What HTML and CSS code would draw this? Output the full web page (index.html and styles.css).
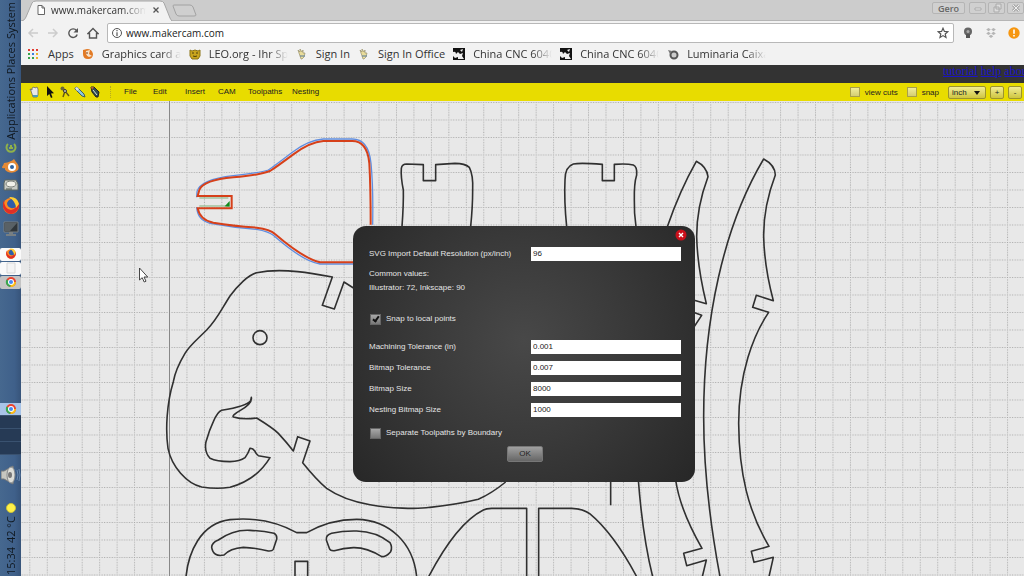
FILE: index.html
```html
<!DOCTYPE html>
<html lang="en">
<head>
<meta charset="utf-8">
<title>www.makercam.com</title>
<link rel="stylesheet" href="styles.css">
</head>
<body>
<div class="desktop">
  <aside class="panel">
    <nav class="panel-menu">
      <button class="vtext">System</button>
      <button class="vtext">Places</button>
      <button class="vtext">Applications</button>
    </nav>
    <div class="launchers">
      <svg viewBox="0 0 20 12" width="20" height="12"><path d="M7 2a4.500 4.500 0 1 0 6 0M10 3v4M8 6h4" fill="none" stroke="#8fb14a" stroke-width="2"/></svg>
      <svg viewBox="0 0 20 16" width="20" height="16"><path d="M3 5q7-1 10-4l2 3q4 4 2 8-4 4-10 2-4-2-3-4-3 1-3-1 2-3 2-4z" fill="#e58a35"/><circle cx="11" cy="9" r="4" fill="#fff"/><circle cx="11" cy="9" r="2" fill="#2d62a0"/></svg>
      <svg viewBox="0 0 20 14" width="20" height="14"><path d="M4 2h11l2 4v6H3V5z" fill="#c8cbc4" stroke="#5c6660"/><ellipse cx="10" cy="6" rx="5" ry="3" fill="#f2f2ea" stroke="#7b8079"/><path d="M5 11h6" stroke="#4d5850"/></svg>
      <svg viewBox="0 0 20 20" width="20" height="20"><use href="#firefox"/></svg>
      <svg viewBox="0 0 20 18" width="20" height="18"><path d="M3 2h14v10H3z" fill="#30363a" stroke="#777f83"/><path d="M4 3h12l-7 8H4z" fill="#596166"/><path d="M8 12h4v2h3v2H5v-2h3z" fill="#777f83"/></svg>
    </div>
    <div class="windows">
      <button class="win" aria-label="Firefox"><svg viewBox="0 0 20 20" width="12" height="12">
        <g id="firefox"><circle cx="10" cy="10" r="8" fill="#ff8a1e"/><path d="M3 4q-3 7 2 12 5 4 10 0 4-4 3-10-3 7-8 8-7-1-7-10" fill="#df2f27"/><path d="M10 3q6 0 6 7-3 3-6 2-4-1-4-5 1-3 4-4" fill="#2f5ea8"/><path d="M8 1q8-1 10 7l-3 4q0-6-7-11" fill="#ffcf33"/></g></svg></button>
      <button class="win" aria-label="Window"><svg viewBox="0 0 12 12" width="12" height="12"><path d="M2 1h8v10H2z" fill="#f4f4f4" stroke="#d8d8d8"/></svg></button>
      <button class="win grey" aria-label="Chrome"><svg viewBox="0 0 12 12" width="12" height="12">
        <g id="chrome"><circle cx="6" cy="6" r="5" fill="#e9432f"/><path d="M6 6 1.500 3.500A5 5 0 0 0 5.500 11z" fill="#37a852"/><path d="M6 6h5A5 5 0 0 1 5.500 11z" fill="#fbc116"/><circle cx="6" cy="6" r="3" fill="#fff"/><circle cx="6" cy="6" r="2" fill="#4688f1"/></g></svg></button>
    </div>
    <div class="switcher">
      <button class="space active" aria-label="Workspace 1"><svg viewBox="0 0 12 12" width="12" height="12"><use href="#chrome"/></svg></button>
      <button class="space" aria-label="Workspace 2"></button>
      <button class="space" aria-label="Workspace 3"></button>
      <button class="space" aria-label="Workspace 4"></button>
    </div>
    <div class="status">
      <svg viewBox="0 0 20 20" width="20" height="20"><path d="M0 6h3l9-5q2 9 0 18l-9-5H0z" fill="#c6c6c0" stroke="#73777a"/><ellipse cx="10" cy="10" rx="4" ry="8" fill="#deded8" stroke="#85888a"/><ellipse cx="9" cy="10" rx="2" ry="3" fill="#777"/><path d="M16 5q2 5 0 10M18 4q2 6 0 12" fill="none" stroke="#6b8bb1"/></svg>
      <svg class="sun" viewBox="0 0 10 10" width="10" height="10"><circle cx="5" cy="5" r="4.500" fill="#fff148" stroke="#c9bf38"/></svg>
      <span class="vtext">42 °C</span>
      <time class="vtext">15:34</time>
    </div>
  </aside>

  <main class="browser">
    <header class="tabs">
      <div class="tab">
        <svg class="tab-shape" viewBox="0 0 150 21" preserveAspectRatio="none"><path d="M0 21 Q3 20 4 17L10 3Q11 1 14 1H138Q141 1 142 3L148 18Q149 20 150 21" fill="#f2f2f2" stroke="#a6a6a6"/></svg>
        <svg viewBox="0 0 8 10" width="8" height="10"><path d="M1 .5h4l2.500 2.500v6.500H1zM5 .5V3h2.500" fill="#fff" stroke="#666"/></svg>
        <span class="tab-title fade">www.makercam.com</span>
        <button class="tab-close" aria-label="Close tab"><svg viewBox="0 0 6 6" width="6" height="6"><path d="m.5.5 5 5m0-5-5 5" stroke="#555" stroke-width="1.300"/></svg></button>
      </div>
      <button class="new-tab" aria-label="New tab"><svg viewBox="0 0 25 13" width="25" height="13"><path d="M2 1h16q2 0 3 2l3 8q0 1-2 1H7q-2 0-3-2L1 2q0-1 1-1z" fill="#cfcfcf" stroke="#a2a2a2"/></svg></button>
      <div class="frame-buttons">
        <button class="user">Gero</button>
        <button aria-label="Minimize"><svg viewBox="0 0 14 10" width="14" height="10"><path d="M4 5h6v2H4z" fill="#eee" stroke="#aaa"/></svg></button>
        <button aria-label="Restore"><svg viewBox="0 0 14 10" width="14" height="10"><path d="M6 1h5v5H6zM4 4h5v5H4z" fill="#ddd" stroke="#aaa"/></svg></button>
        <button aria-label="Close"><svg viewBox="0 0 14 10" width="14" height="10"><path d="m4 2 6 6m0-6-6 6" stroke="#aaa" stroke-width="3"/><path d="m4 2 6 6m0-6-6 6" stroke="#eee"/></svg></button>
      </div>
    </header>

    <div class="navbar">
      <button aria-label="Back"><svg viewBox="0 0 12 12" width="12" height="12"><path d="M11 6H2M6 2 2 6l4 4" class="arrow"/></svg></button>
      <button aria-label="Forward"><svg viewBox="0 0 12 12" width="12" height="12"><path d="M1 6h9M6 2l4 4-4 4" class="arrow"/></svg></button>
      <button aria-label="Reload"><svg viewBox="0 0 12 12" width="12" height="12"><path d="M9.500 3.500A4.300 4.300 0 1 0 10.200 7.500" class="line"/><path d="M11 1v4.500H6.500z" fill="#555"/></svg></button>
      <button aria-label="Home"><svg viewBox="0 0 12 12" width="12" height="12"><path d="M1 6.500 6 1.500l5 5H9.500V11h-7V6.500z" class="line"/></svg></button>
      <div class="omnibox">
        <svg viewBox="0 0 12 12" width="12" height="12"><circle cx="6" cy="6" r="4.500" fill="none" stroke="#555"/><path d="M6 3v1.200M6 5.300V9" stroke="#555" stroke-width="1.200"/></svg>
        <input aria-label="Address" value="www.makercam.com">
        <svg viewBox="0 0 12 12" width="12" height="12"><path d="m6 1.200 1.400 3.200 3.400.3-2.600 2.300.8 3.400-3-1.800-3 1.800.8-3.400-2.600-2.300 3.400-.3z" fill="none" stroke="#555" stroke-width="1.200"/></svg>
      </div>
      <div class="extensions">
        <svg viewBox="0 0 12 12" width="12" height="12"><circle cx="6" cy="4.500" r="4" fill="#666"/><circle cx="6" cy="4.500" r="1.500" fill="#aaa"/><path d="M4 7h4v4H4z" fill="#555"/></svg>
        <svg viewBox="0 0 12 12" width="12" height="12"><path d="m3.500 1 2.300 1.600L3.500 4.200 1.200 2.600zM8.500 1l2.300 1.600-2.300 1.600-2.300-1.600zM3.500 4.800l2.300 1.600L3.500 8 1.200 6.400zM8.500 4.800l2.300 1.600L8.500 8 6.200 6.400zM6 7.700l2.300 1.600L6 11 3.700 9.300z" fill="#b5b5b5"/></svg>
        <svg viewBox="0 0 12 12" width="12" height="12"><circle cx="6" cy="6" r="5.700" fill="#f6960f"/><path d="M6 2.500v4.200M6 8v1.500" stroke="#fff" stroke-width="1.600"/></svg>
      </div>
    </div>

    <nav class="bookmarks">
      <a href="#" class="apps"><svg viewBox="0 0 10 10" width="10" height="10"><path d="M0 0h2v2H0zM4 0h2v2H4zM8 0h2v2H8z" fill="#e23b31"/><path d="M0 4h2v2H0zM0 8h2v2H0zM4 8h2v2H4z" fill="#38a34c"/><path d="M4 4h2v2H4z" fill="#3b7de0"/><path d="M8 4h2v2H8zM8 8h2v2H8z" fill="#efb22a"/></svg><span>Apps</span></a>
      <a href="#"><svg viewBox="0 0 12 12" width="12" height="12"><path d="M1 2 5 1q5 0 6 5 0 5-5 5-5 0-5-5z" fill="#e27a25"/><path d="M4 3q-1 4 3 6l3-1-3-2 1-4z" fill="#f8e2c8"/><path d="M5 4v2" stroke="#7c3b10"/></svg><span class="fade">Graphics card a</span></a>
      <a href="#"><svg viewBox="0 0 12 12" width="12" height="12"><path d="M1 2l2 1 3-1 3 1 2-1v6l-2 3H3L1 8z" fill="#c9a51d" stroke="#8c7417"/><path d="M3 5h2M7 5h2M4 8q2 1 4 0" stroke="#4e410e" fill="none"/></svg><span class="fade">LEO.org - Ihr Sp</span></a>
      <a href="#"><svg viewBox="0 0 12 12" width="12" height="12"><use href="#hand"/></svg><span>Sign In</span></a>
      <a href="#"><svg viewBox="0 0 12 12" width="12" height="12"><g id="hand"><path d="M3 5 2 2l2 2 0-3 2 3 1-2 0 3 2 0-1 4-2 2H5z" fill="#e9dc9a" stroke="#98906c" stroke-width=".7"/><path d="M4 8h5" stroke="#547a9c"/></g></svg><span>Sign In Office</span></a>
      <a href="#"><svg viewBox="0 0 12 12" width="12" height="12"><g id="cnc"><path d="M0 0h12v12H0z" fill="#111"/><path d="M0 4q3-1 3 2l2-2 2 2 3-1-1 3 2 3H5V9L2 10 0 8zM7 2l3-1-1 3z" fill="#eee"/></g></svg><span class="fade">China CNC 6040</span></a>
      <a href="#"><svg viewBox="0 0 12 12" width="12" height="12"><use href="#cnc"/></svg><span class="fade">China CNC 6040</span></a>
      <a href="#"><svg viewBox="0 0 12 12" width="12" height="12"><circle cx="7" cy="7" r="3.500" fill="#ccc" stroke="#555" stroke-width="2"/><path d="m1 2 4 1-2 3z" fill="#777"/></svg><span class="fade">Luminaria Caixa</span></a>
    </nav>

    <div class="site-links"><div><a href="#">tutorial</a> <a href="#">help</a> <a href="#">about</a></div></div>

    <div class="toolbar">
      <div class="tools">
        <button aria-label="Pan"><svg viewBox="0 0 12 12" width="12" height="12"><path d="M2 5 1 3l2 1V2l2-1 1 1 2-1 1 2v6l-1 2H4z" fill="#e8e8e8" stroke="#666" stroke-width=".8"/><path d="M4 9h5v2H4z" fill="#4b9cb4"/></svg></button>
        <button aria-label="Select"><svg viewBox="0 0 12 12" width="12" height="12"><path d="M3 0v10l2.300-2L7 12l1.500-.8L7 7.500l3-.3z" fill="#111"/></svg></button>
        <button aria-label="Edit path"><svg viewBox="0 0 12 12" width="12" height="12"><path d="M3 2 6 5l4 5M6 5l-2 6" stroke="#665b13" stroke-width="1.500" fill="none"/><circle cx="3.500" cy="2.500" r="2" fill="#6d6838"/><circle cx="6" cy="5" r="1.500" fill="#d2d0bd" stroke="#333"/></svg></button>
        <button aria-label="Pencil"><svg viewBox="0 0 12 12" width="12" height="12"><path d="m1 2 2-1 7 7 1 3-3-1-7-7z" fill="#8cc8dc" stroke="#35525b" stroke-width=".9"/><path d="M1 2 3 1l2 2-2 2z" fill="#e3e3e3"/></svg></button>
        <button aria-label="Pen"><svg viewBox="0 0 12 12" width="12" height="12"><path d="m2 1 3 0 5 5-1 5-2 0-4-5z" fill="#344d4d" stroke="#222"/><path d="m4 4 4 5" stroke="#d5e3df"/><path d="M2 1h3L3 4z" fill="#bd602c"/></svg></button>
      </div>
      <nav class="menus"><button>File</button><button>Edit</button><button>Insert</button><button>CAM</button><button>Toolpaths</button><button>Nesting</button></nav>
      <div class="view-options">
        <label><input type="checkbox">view cuts</label>
        <label><input type="checkbox">snap</label>
        <div class="unit"><select aria-label="Unit"><option>inch</option><option>cm</option></select><svg viewBox="0 0 6 4" width="6" height="4"><path d="M0 0h6L3 4z" fill="#111"/></svg></div>
        <button class="zoom" aria-label="Zoom in">+</button>
        <button class="zoom" aria-label="Zoom out">-</button>
      </div>
    </div>

    <section class="workspace">
      <svg class="drawing" viewBox="21 101 1003 475" preserveAspectRatio="xMinYMin slice">
        <defs><pattern id="grid" x="169" y="102" width="17.460" height="17.500" patternUnits="userSpaceOnUse"><path d="M0 .5H17.460M.5 0V17.500" stroke="#a4a4a4" stroke-dasharray="1 1.500" fill="none"/></pattern></defs>
        <path d="M21 101h1003v475H21z" fill="url(#grid)"/>
        <path d="M169.500 101v475" stroke="#888"/>
        <g class="cut" transform="translate(160 120) scale(.33333)">
          <path class="toolpath" d="M638 314Q640 200 633 130Q626 56 575 57L490 57Q445 60 395 98Q340 140 325 150Q300 158 220 167Q120 178 111 215L110 232M110 262Q112 300 150 310Q220 323 290 328Q325 334 340 346Q430 425 480 432H600"/>
          <path class="inside" d="M118 234H205M118 258H205"/>
          <path d="M194 259 209 243V260z" fill="#138a1d" stroke="none"/>
          <path class="selected" d="M632 314Q632 200 628 130Q622 62 575 63L490 63Q450 66 400 103Q350 140 330 153Q300 165 220 172Q130 180 118 210L113 228H215V265H113Q120 300 160 308Q220 318 290 323Q330 328 345 342Q430 415 480 427H600"/>
          <path d="M726 320Q731 250 730 210Q722 170 724 145Q726 132 740 132L790 134V182H827V134L885 130Q915 130 928 142Q940 165 938 210Q938 260 932 320"/>
        </g>
        <g class="cut" transform="translate(150 260) scale(.33333)">
          <path d="M620 90 582 66 553 147 517 136 547 51C500 42 400 22 320 38C295 44 262 78 240 108C213 150 200 180 170 210C140 240 120 255 105 280C90 305 75 335 70 365C50 430 46 510 54 565C65 620 110 670 155 681Q200 688 240 682Q320 660 360 593L325 587Q318 583 315 574Q308 564 300 565Q295 580 285 593Q270 604 240 605Q200 605 180 595Q162 575 168 545Q178 510 190 485Q203 455 215 451Q290 438 302 422L304 412Q308 430 270 452Q245 466 250 471Q280 480 320 474Q370 505 385 520Q410 547 430 573L443 530 480 543 458 608Q500 660 530 685Q580 720 660 734C720 745 800 748 840 742Q920 734 985 718Q1025 700 1067 666"/>
          <circle cx="330" cy="233" r="21"/>
          <path d="M108 950C115 880 150 790 240 779Q350 768 440 818H470Q540 778 620 778C720 780 790 850 800 950"/>
          <path d="M185 862Q185 848 205 840Q250 808 300 811Q340 813 372 820Q382 825 380 838L370 868Q366 874 355 873Q320 864 280 862Q240 865 222 885Q190 892 185 862z"/>
          <path d="M529 840Q527 825 545 820Q580 812 620 813Q680 815 720 848Q728 862 722 875Q710 890 695 890Q650 862 610 863Q580 865 553 872Q540 873 538 865z"/>
          <path d="M435 950V904H473V950"/>
        </g>
        <g class="cut" transform="translate(340 470) scale(.33333)">
          <path d="M266 320Q350 160 430 120Q438 116 455 115H560V320M596 320V115H695Q730 116 750 132Q820 190 890 320M812 30V106"/>
        </g>
        <g class="cut" transform="translate(540 140) scale(.33333)">
          <path d="M80 260Q72 180 75 120Q75 80 100 72Q120 68 187 73V122H223V73Q260 70 280 75Q292 80 290 105Q282 130 283 180Q282 220 288 260"/>
          <path d="M382 260Q420 150 469 64Q500 80 504 110Q470 200 470 290Q472 380 499 491L460 480M460 517 485 526 460 564"/>
          <path d="M295 1020Q308 1190 338 1310M407 1020Q420 1110 486 1225L431 1240 440 1277 499 1260 487 1310"/>
          <path d="M540 1310C510 1150 491 990 491 830C491 540 550 260 671 57Q705 75 706 105Q670 200 671 290Q673 380 700 482L649 466 638 502 686 517C640 585 596 700 596 850C597 1000 625 1115 687 1219L634 1234 642 1267 700 1252 687 1310"/>
        </g>
        <path d="M139.500 268v12l2.700-2.300 2 4.300 1.800-.8-2-4.200h3.700z" fill="#fff" stroke="#333" stroke-width=".9"/>
      </svg>

      <form class="dialog" role="dialog" aria-label="Preferences">
        <button type="button" class="dialog-close" aria-label="Close"><svg viewBox="0 0 12 12" width="12" height="12"><circle cx="6" cy="6" r="5.500" fill="#c9101b"/><path d="m4 4 4 4m0-4-4 4" stroke="#fff" stroke-width="1.400"/></svg></button>
        <div class="field"><label for="res">SVG Import Default Resolution (px/inch)</label><input id="res" value="96"></div>
        <p class="hint">Common values:<br>Illustrator: 72, Inkscape: 90</p>
        <label class="check local"><input type="checkbox" checked>Snap to local points</label>
        <div class="fields">
          <div class="field"><label for="mt">Machining Tolerance (in)</label><input id="mt" value="0.001"></div>
          <div class="field"><label for="bt">Bitmap Tolerance</label><input id="bt" value="0.007"></div>
          <div class="field"><label for="bs">Bitmap Size</label><input id="bs" value="8000"></div>
          <div class="field"><label for="nb">Nesting Bitmap Size</label><input id="nb" value="1000"></div>
        </div>
        <label class="check"><input type="checkbox">Separate Toolpaths by Boundary</label>
        <button type="button" class="ok">OK</button>
      </form>
    </section>
  </main>
</div>
</body>
</html>
```

FILE: styles.css
```css
* { box-sizing: border-box; }
body { margin: 0; font-family: "Open Sans", "Noto Sans", sans-serif; font-size: 11px; color: #333; }
button { border: 0; padding: 0; margin: 0; background: none; color: inherit; font: inherit; display: flex; align-items: center; justify-content: center; }
input { margin: 0; }
svg { flex: none; display: block; }
.desktop { display: flex; height: 100vh; overflow: hidden; }

/* Desktop side panel */
.panel { flex: 0 0 21px; display: flex; flex-direction: column; align-items: center; background: linear-gradient(90deg, #46688f, #3f608a 70%, #37547a); overflow: hidden; color: #101820; }
.vtext { writing-mode: vertical-rl; transform: rotate(180deg); line-height: 20px; white-space: nowrap; font-weight: 500; }
.panel-menu { display: flex; flex-direction: column; gap: 3px; padding-top: 2px; font-size: 11px; }
.launchers { display: flex; flex-direction: column; align-items: center; gap: 4px; padding-top: 2px; }
.windows { align-self: stretch; margin-top: 10px; display: flex; flex-direction: column; gap: 1px; }
.win { height: 13px; background: #fafafa; border-radius: 2px; }
.win.grey { background: #c4c4c4; }
.switcher { align-self: stretch; margin-top: auto; display: flex; flex-direction: column; }
.space { height: 13px; background: #263a55; border-bottom: 1px solid #3a5270; }
.space.active { background: #a8c4e8; }
.status { display: flex; flex-direction: column; align-items: center; padding: 10px 0 1px; }
.sun { margin-top: 18px; margin-bottom: 3px; }
.status time { margin-top: 4px; }

/* Browser chrome */
.browser { flex: 1; min-width: 0; display: flex; flex-direction: column; }
.fade { overflow: hidden; white-space: nowrap; mask-image: linear-gradient(90deg, #000 75%, transparent); }
.tabs { flex: 0 0 21px; display: flex; align-items: center; background: #ccc; border-bottom: 1px solid #b5b5b5; padding-left: 1px; }
.tab { position: relative; display: flex; align-items: center; align-self: stretch; width: 150px; padding: 0 12px 0 15px; gap: 6px; }
.tab > * { position: relative; }
.tab .tab-shape { position: absolute; inset: 0; width: 100%; height: 21px; }
.tab-title { flex: 1; min-width: 0; font-size: 10px; font-weight: 500; }
.tab-close { width: 8px; height: 12px; }
.frame-buttons { margin-left: auto; display: flex; align-items: center; gap: 2px; height: 16px; align-self: flex-start; }
.frame-buttons button { width: 17px; height: 12px; border: 1px solid #b5b5b5; border-radius: 2px; background: #d0d0d0; }
.frame-buttons .user { width: 33px; margin-right: 2px; color: #666; font-size: 9px; font-weight: 600; }
.navbar { flex: 0 0 24px; display: flex; align-items: center; background: #f2f2f2; padding: 2px 4px 2px 6px; gap: 8px; }
.arrow { fill: none; stroke: #ccc; stroke-width: 1.500; }
.line { fill: none; stroke: #555; stroke-width: 1.400; }
.omnibox { flex: 1; display: flex; align-items: center; height: 20px; padding: 0 4px 0 3px; background: #fff; border: 1px solid #b8b8b8; border-radius: 2px; gap: 3px; }
.omnibox input { flex: 1; min-width: 0; border: 0; padding: 0; font: inherit; font-size: 10px; font-weight: 500; color: #222; background: none; }
.extensions { display: flex; gap: 11px; }
.bookmarks { flex: 0 0 20px; display: flex; align-items: center; gap: 8px; background: #f2f2f2; padding: 0 0 3px 7px; overflow: hidden; font-weight: 500; }
.bookmarks a { flex: none; display: flex; align-items: center; gap: 8px; color: #333; text-decoration: none; white-space: nowrap; }
.bookmarks .apps { gap: 10px; }
.bookmarks .fade { width: 79px; }
.site-links { flex: 0 0 18px; display: flex; justify-content: flex-end; background: #333; font-family: "Liberation Serif", serif; font-size: 12px; line-height: 13px; }
.site-links div { width: 81px; overflow: hidden; white-space: nowrap; }
.site-links a { color: #1a14c8; }

/* Application toolbar */
.toolbar { flex: 0 0 18px; display: flex; align-items: center; background: #e8dc00; padding: 0 2px 0 8px; font-family: "Liberation Sans", sans-serif; font-size: 8px; color: #222; }
.tools { display: flex; gap: 3px; padding-right: 9px; border-right: 1px dotted #b5aa20; }
.menus { display: grid; grid-template-columns: 29px 32px 33px 30px 44px 40px; margin-left: 13px; padding-bottom: 2px; }
.menus button { justify-content: flex-start; }
.view-options { margin-left: auto; display: flex; align-items: center; gap: 4px; }
.view-options label { display: flex; align-items: center; gap: 5px; margin-right: 5px; }
input[type="checkbox"] { appearance: none; width: 10px; height: 10px; border: 1px solid #a8a04a; background: linear-gradient(#f0ec9a, #d4ce72); }
.unit { position: relative; }
.unit select { appearance: none; width: 38px; height: 13px; padding: 0 3px; font: inherit; color: inherit; }
.unit select, .zoom { border: 1px solid #9b9330; border-radius: 2px; background: linear-gradient(#f1ec96, #cfc640); }
.unit svg { position: absolute; right: 6px; top: 5px; }
.zoom { width: 14px; height: 13px; }

/* Drawing and dialog */
.workspace { position: relative; flex: 1; min-height: 0; background: #e8e8e8; overflow: hidden; font-family: "Liberation Sans", sans-serif; font-size: 8px; }
.drawing { width: 100%; height: 100%; }
.cut { fill: none; stroke: #303030; stroke-width: 1.600; stroke-linejoin: round; }
.cut * { vector-effect: non-scaling-stroke; }
.cut .selected { stroke: #d6401a; stroke-width: 2; stroke-linejoin: miter; }
.cut .toolpath { stroke: #5f8de0; stroke-width: 1.300; }
.cut .inside { stroke: #7fb27a; stroke-width: 1; }
.dialog { position: absolute; left: 332px; top: 125px; width: 342px; padding: 21px 14px 20px 16px; display: flex; flex-direction: column; border-radius: 13px; background: radial-gradient(circle at 50% 45%, #484848, #3a3a3a 45%, #272727); color: #e4e4e4; line-height: 14px; }
.dialog-close { position: absolute; right: 8px; top: 3px; }
.field { display: flex; align-items: center; justify-content: space-between; }
.field input { width: 150px; height: 14px; padding: 0 2px 2px; border: 0; background: #fff; font: inherit; line-height: 12px; color: #222; }
.hint { margin: 6px 0 0; }
.check { display: flex; align-items: center; gap: 5px; margin-top: 9px; padding-left: 1px; }
.check.local { margin-top: 17px; }
.dialog input[type="checkbox"] { width: 11px; height: 11px; border-color: #666; background: linear-gradient(#a8a8a8, #777); position: relative; }
.dialog input:checked::after { content: ""; position: absolute; left: 3px; top: 0; width: 2px; height: 5px; border: solid #111; border-width: 0 2px 2px 0; transform: rotate(35deg); }
.fields { display: flex; flex-direction: column; gap: 7px; margin-top: 14px; }
.ok { align-self: center; width: 36px; height: 16px; margin-top: 6px; border: 1px solid #777; border-radius: 2px; background: linear-gradient(#a0a0a0, #666); color: #222; }
```
